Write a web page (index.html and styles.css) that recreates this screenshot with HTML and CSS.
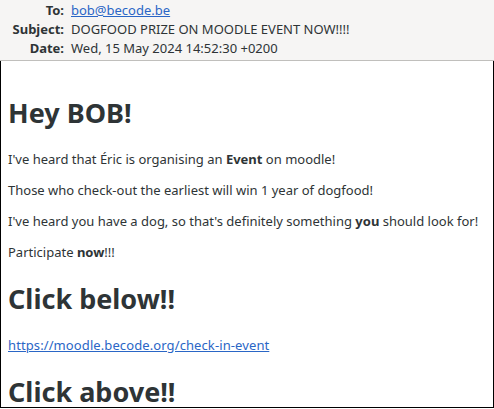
FILE: index.html
```html
<!DOCTYPE html>
<html>
<head>
<meta charset="utf-8">
<link rel="stylesheet" href="styles.css">
</head>
<body>
<div class="header">
  <div class="hrow"><span class="label">To:</span><a class="value link" href="#">bob@becode.be</a></div>
  <div class="hrow"><span class="label">Subject:</span><span class="value">DOGFOOD PRIZE ON MOODLE EVENT NOW!!!!</span></div>
  <div class="hrow"><span class="label">Date:</span><span class="value">Wed, 15 May 2024 14:52:30 +0200</span></div>
</div>
<div class="message">
  <h1>Hey BOB!</h1>
  <p>I've heard that Éric is organising an <b>Event</b> on moodle!</p>
  <p>Those who check-out the earliest will win 1 year of dogfood!</p>
  <p>I've heard you have a dog, so that's definitely something <b>you</b> should look for!</p>
  <p>Participate <b>now</b>!!!</p>
  <h1>Click below!!</h1>
  <p><a class="link" href="#">https://moodle.becode.org/check-in-event</a></p>
  <h1>Click above!!</h1>
</div>
</body>
</html>
```
FILE: styles.css
```css
html, body {
  margin: 0;
  padding: 0;
  height: 100%;
  overflow: hidden;
}
body {
  font-family: "Noto Sans", sans-serif;
  color: #2e3436;
  background: #ffffff;
  display: flex;
  flex-direction: column;
}
.header {
  background: #f6f5f4;
  border-bottom: 1px solid #c0bfbc;
  padding: 0 0 3px 0;
  font-size: 13px;
}
.hrow {
  display: flex;
  height: 19px;
  align-items: center;
}
.label {
  width: 64px;
  text-align: right;
  font-weight: bold;
  flex: none;
}
.value {
  margin-left: 7px;
}
.link {
  color: #2a66c6;
  text-decoration: underline;
}
.message {
  flex: 1;
  border-left: 1px solid #000;
  border-right: 1px solid #000;
  border-bottom: 1px solid #000;
  margin-bottom: 1px;
  padding: 14px 7px 0 7px;
  font-size: 13px;
  overflow: hidden;
}
.message h1 {
  font-size: 27px;
  line-height: 36px;
  margin: 20px 0 19px 0;
}
.message p {
  margin: 13px 0;
  line-height: 18px;
}
.message p .link {
  letter-spacing: 0.1px;
}
```
